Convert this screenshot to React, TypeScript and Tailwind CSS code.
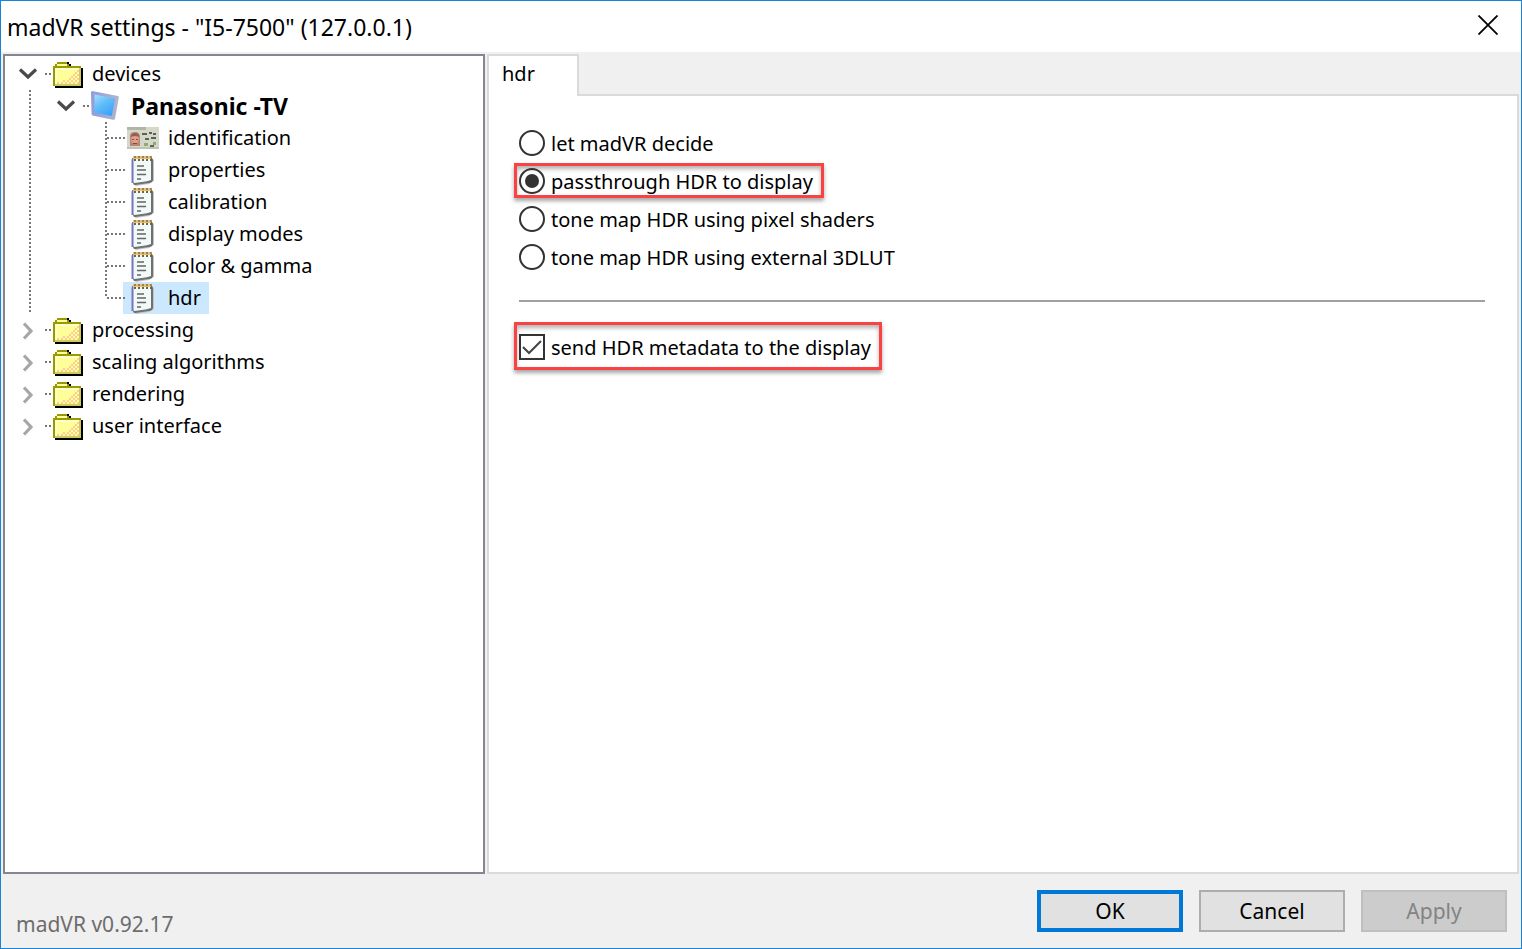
import React, { useState } from 'react'

const PAGES = ['identification', 'properties', 'calibration', 'display modes', 'color & gamma', 'hdr']
const GROUPS = ['processing', 'scaling algorithms', 'rendering', 'user interface']
const HDR_MODES = [
  'let madVR decide',
  'passthrough HDR to display',
  'tone map HDR using pixel shaders',
  'tone map HDR using external 3DLUT',
]

const DOTS_X = 'h-0.5 shrink-0 bg-[repeating-linear-gradient(to_right,#777_0_2px,transparent_2px_4px)]'
const DOTS_Y = 'w-0.5 shrink-0 bg-[repeating-linear-gradient(to_bottom,#777_0_2px,transparent_2px_4px)]'
const HIGHLIGHT =
  'border-[#fb4141] shadow-[0_3px_4px_rgba(0,0,0,0.35),inset_0_3px_4px_rgba(0,0,0,0.3)]'

function FolderIcon() {
  return (
    <svg viewBox="0 -1 15 14" className="h-7 w-[30px] shrink-0" shapeRendering="crispEdges">
      <path d="M7 0h1v1h1v1h-2zM14 3h1v10H1v-1h13z" fill="#000" />
      <path d="M2 0h5v1h1v1h6v10H0V2h1V1h1z" fill="#999900" />
      <path d="M2 1h5v1H2zM1 3h12v8H1z" fill="#ffff99" />
      <path d="M1 3h12v1H2v7H1z" fill="#ffffcc" />
      <path d="M1 11h12v-8h1v9H1z" fill="#cccc66" />
      <path
        d="M12 4h1v1h-1zM11 5h1v1h-1zM10 6h1v1h-1zM12 6h1v1h-1zM9 7h1v1H9zM11 7h1v1h-1zM8 8h1v1H8zM10 8h1v1h-1zM12 8h1v1h-1zM5 9h1v1H5zM7 9h1v1H7zM9 9h1v1H9zM11 9h1v1h-1zM2 10h1v1H2zM4 10h1v1H4zM6 10h1v1H6zM8 10h1v1H8zM10 10h1v1h-1zM12 10h1v1h-1z"
        fill="#ffcc99"
      />
    </svg>
  )
}

function DisplayIcon() {
  return (
    <svg viewBox="0 0 28 30" className="h-[30px] w-7 shrink-0">
      <defs>
        <linearGradient id="screen" x1="0" y1="0" x2="0.6" y2="1">
          <stop offset="0" stopColor="#a5e0fb" />
          <stop offset="0.5" stopColor="#62bdf8" />
          <stop offset="1" stopColor="#3aa5fb" />
        </linearGradient>
        <linearGradient id="bezel" x1="0" y1="0" x2="1" y2="0">
          <stop offset="0" stopColor="#8f9cdc" />
          <stop offset="1" stopColor="#b4b4cb" />
        </linearGradient>
      </defs>
      <path d="M1 0l26 5q1 .3.8 1.500L24 28q-.4 1-2 .7L1.500 24.500Q.6 24 .6 23L0 1.500Q0 0 1 0z" fill="url(#bezel)" />
      <path d="M3.500 3.500L24 7.500 20.800 25 3.500 21.500z" fill="url(#screen)" />
    </svg>
  )
}

function CardIcon() {
  return (
    <svg viewBox="0 0 32 22" className="h-[22px] w-8 shrink-0">
      <path d="M0 0h32v22H0z" fill="#d5d8c8" />
      <path d="M0 0h19v3H0z" fill="#b2b6a6" />
      <path d="M0 20h32v2H0z" fill="#c0c2b2" />
      <path d="M3 19V9q0-4 5-4 5 0 5 5v9z" fill="#b98476" />
      <ellipse cx="8" cy="12" rx="4" ry="5" fill="#dca08a" />
      <path d="M4 10q0-4 4-4t4 4q-4-2-8 0z" fill="#8f6158" />
      <path d="M5 12h2v1H5zM9 12h2v1H9zM6 16h4v1H6z" fill="#8a473e" />
      <path d="M15 6h5v2h-5zM22 5h3v2h-3zM26 6h3v2h-3zM18 11h4v2h-4zM24 10h5v2h-5zM23 18h4v2h-4z" fill="#5c6058" />
      <path d="M17 16h4v3h-4zM26 15h3v3h-3z" fill="#8eac70" />
    </svg>
  )
}

function NotepadIcon() {
  return (
    <svg viewBox="0 0 32 32" className="size-8 shrink-0">
      <path d="M8 5h17q2 0 2 2v20l-5 3-13 2q-2-.5-2-2z" fill="#c4c4c4" />
      <path d="M5 4h19q2 0 2 2v20q-1 3-4 3L8 31q-2 0-2-2z" fill="#707070" />
      <path d="M4.500 6q0-2 2-2v25h-2z" fill="#7674c8" />
      <path d="M6.500 4H23q1 0 1 1v21q-4 1.500-9 2l-7.500 1q-1 0-1-1z" fill="#f2faf9" />
      <path d="M8 4v3M12 4v3M16 4v3M20 4v3M24 4v3" stroke="#77603f" strokeWidth="2" />
      <path d="M6 2h18v3H6z" fill="#e3c277" />
      <path d="M8 2v2M12 2v2M16 2v2M20 2v2M24 2v2" stroke="#8d6b3a" strokeWidth="1.500" />
      <path d="M10 12h7M10 16h9M10 20.500h9M10 25h4" stroke="#666" strokeWidth="1.600" />
    </svg>
  )
}

function Chevron({ open, label, onClick }: { open: boolean; label: string; onClick: () => void }) {
  return (
    <button
      type="button"
      aria-label={`${open ? 'Collapse' : 'Expand'} ${label}`}
      aria-expanded={open}
      onClick={onClick}
      className="flex size-5 shrink-0 items-center justify-center"
    >
      <svg viewBox="0 0 20 20" className="size-5" fill="none" strokeWidth="3.200">
        {open ? <path d="M2 5.500l8 7.500 8-7.500" stroke="#4a4a4a" /> : <path d="M6 3.500l7 7.500-7 7.500" stroke="#a6a6a6" />}
      </svg>
    </button>
  )
}

function PageItem({ name, last, selected, onSelect }: {
  name: string
  last: boolean
  selected: boolean
  onSelect: () => void
}) {
  return (
    <li role="treeitem" aria-selected={selected} className="flex h-8">
      <span className={`${DOTS_Y} ${last ? 'h-1/2' : 'h-full'}`} />
      <span className={`${DOTS_X} w-4 self-center`} />
      <button
        type="button"
        onClick={onSelect}
        className={`flex items-center pr-2 ${selected ? 'bg-[#cce8ff]' : ''}`}
      >
        <span className={`${DOTS_X} w-1`} />
        {name === 'identification' ? <CardIcon /> : <NotepadIcon />}
        <span className="pl-[9px]">{name}</span>
      </button>
    </li>
  )
}

function SettingsTree() {
  const [devicesOpen, setDevicesOpen] = useState(true)
  const [displayOpen, setDisplayOpen] = useState(true)
  const [openGroups, setOpenGroups] = useState<string[]>([])
  const [page, setPage] = useState('hdr')

  const toggleGroup = (name: string) =>
    setOpenGroups((prev) => (prev.includes(name) ? prev.filter((n) => n !== name) : [...prev, name]))

  return (
    <ul role="tree" aria-label="Settings" className="w-[482px] shrink-0 border-2 border-[#828790] bg-white pt-0.5 whitespace-nowrap">
      <li role="treeitem">
        <div className="flex h-8 items-center pl-[13px]">
          <Chevron open={devicesOpen} label="devices" onClick={() => setDevicesOpen(!devicesOpen)} />
          <span className={`${DOTS_X} mr-0.5 ml-[7px] w-1.5`} />
          <FolderIcon />
          <span className="pl-[9px]">devices</span>
        </div>
        {devicesOpen && (
          <div className="flex pl-6">
            <span className={DOTS_Y} />
            <ul role="group">
              <li role="treeitem">
                <div className="flex h-8 items-center pl-[25px]">
                  <Chevron open={displayOpen} label="Panasonic -TV" onClick={() => setDisplayOpen(!displayOpen)} />
                  <span className={`${DOTS_X} mr-0.5 ml-[7px] w-1.5`} />
                  <DisplayIcon />
                  <span className="pl-3 text-[23px] leading-8 font-bold">Panasonic -TV</span>
                </div>
                {displayOpen && (
                  <ul role="group" className="pl-[74px]">
                    {PAGES.map((name, i) => (
                      <PageItem
                        key={name}
                        name={name}
                        last={i === PAGES.length - 1}
                        selected={page === name}
                        onSelect={() => setPage(name)}
                      />
                    ))}
                  </ul>
                )}
              </li>
            </ul>
          </div>
        )}
      </li>
      {GROUPS.map((name) => (
        <li key={name} role="treeitem" className="flex h-8 items-center pl-[13px]">
          <Chevron open={openGroups.includes(name)} label={name} onClick={() => toggleGroup(name)} />
          <span className={`${DOTS_X} mr-0.5 ml-[7px] w-1.5`} />
          <FolderIcon />
          <span className="pl-[9px]">{name}</span>
        </li>
      ))}
    </ul>
  )
}

function HdrPanel() {
  const [mode, setMode] = useState(HDR_MODES[1])
  const [sendMetadata, setSendMetadata] = useState(true)

  return (
    <section role="tabpanel" aria-label="hdr" className="flex-1 border-2 border-[#dadada] bg-white pt-[29px] pr-8 pl-[25px]">
      <fieldset aria-label="HDR mode" className="flex flex-col items-start gap-[3px]">
        {HDR_MODES.map((name, i) => (
          <label
            key={name}
            className={`flex h-[35px] items-center gap-1.5 border-3 pr-2 pl-0.5 ${i === 1 ? HIGHLIGHT : 'border-transparent'}`}
          >
            <input
              type="radio"
              name="hdr-mode"
              checked={mode === name}
              onChange={() => setMode(name)}
              className="size-[26px] shrink-0 appearance-none rounded-full border-2 border-[#333] bg-clip-content p-1 checked:bg-[#333]"
            />
            <span className="pt-0.5">{name}</span>
          </label>
        ))}
      </fieldset>

      <hr className="mt-[26px] mb-5 ml-[5px] border-t-2 border-[#a0a0a0]" />

      <label className={`inline-flex h-12 items-center gap-1.5 border-3 pt-0.5 pr-2 pl-0.5 ${HIGHLIGHT}`}>
        <span className="grid shrink-0">
          <input
            type="checkbox"
            checked={sendMetadata}
            onChange={(e) => setSendMetadata(e.target.checked)}
            className="peer col-start-1 row-start-1 size-[26px] appearance-none border-2 border-[#333] bg-white"
          />
          <svg viewBox="0 0 26 26" className="pointer-events-none invisible col-start-1 row-start-1 size-[26px] peer-checked:visible" fill="none">
            <path d="M4 13l6 6L22 7" stroke="#444" strokeWidth="2" />
          </svg>
        </span>
        <span className="pt-0.5">send HDR metadata to the display</span>
      </label>
    </section>
  )
}

export default function App() {
  return (
    <div className="flex min-h-screen flex-col border border-[#1883d7] bg-[#f0f0f0] font-['Noto_Sans',sans-serif] text-[20px] leading-8 text-black">
      <header className="flex h-[51px] items-center justify-between bg-white pr-[23px] pb-1 pl-1.5">
        <h1 className="pt-1 text-[23px]">madVR settings - "I5-7500" (127.0.0.1)</h1>
        <button type="button" aria-label="Close">
          <svg viewBox="0 0 20 20" className="size-5" stroke="#000" strokeWidth="1.800">
            <path d="M.5.5l19 19M19.500.5l-19 19" />
          </svg>
        </button>
      </header>

      <main className="flex flex-1 gap-0.5 px-0.5 pt-0.5">
        <SettingsTree />
        <div className="flex min-w-0 flex-1 flex-col">
          <div role="tablist" className="-mb-0.5 flex">
            <button
              type="button"
              role="tab"
              aria-selected="true"
              className="relative h-[42px] w-[92px] border-2 border-b-0 border-[#dadada] bg-white pb-1 pl-[13px] text-left"
            >
              hdr
            </button>
          </div>
          <HdrPanel />
        </div>
      </main>

      <footer className="flex h-[74px] items-start gap-4 pt-4 pr-3.5 pl-[15px] text-[21px] leading-8">
        <span className="flex-1 pt-[18px] text-[#6d6d6d]">madVR v0.92.17</span>
        <button type="button" className="h-[42px] w-[146px] border-4 border-[#0078d7] bg-[#e1e1e1]">
          OK
        </button>
        <button type="button" className="h-[42px] w-[146px] border-2 border-[#adadad] bg-[#e1e1e1]">
          Cancel
        </button>
        <button type="button" disabled className="h-[42px] w-[146px] border-2 border-[#bfbfbf] bg-[#ccc] text-[#838383]">
          Apply
        </button>
      </footer>
    </div>
  )
}
